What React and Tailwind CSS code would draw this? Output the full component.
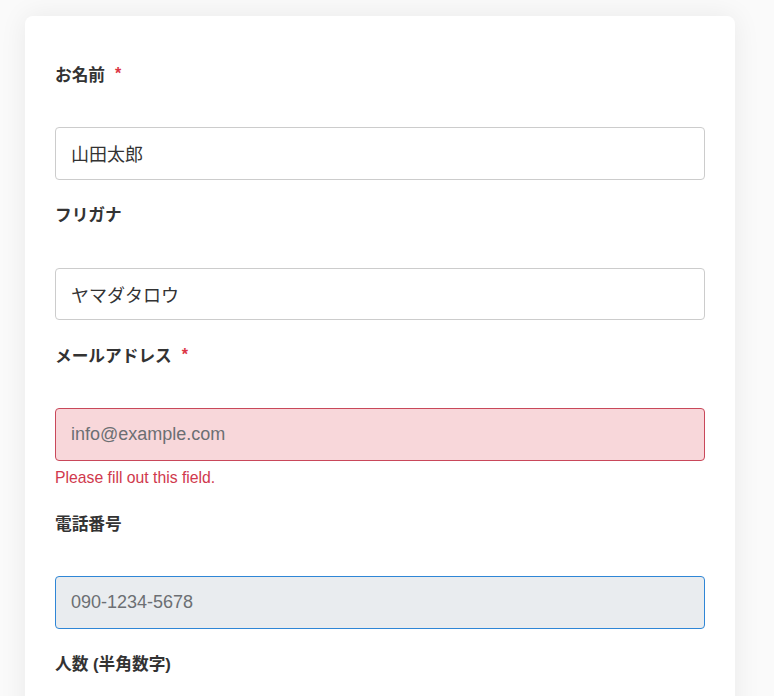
import { useState } from "react";

const fields = [
  { id: "name", label: "お名前", required: true, value: "山田太郎", placeholder: "" },
  { id: "kana", label: "フリガナ", value: "ヤマダタロウ", placeholder: "" },
  {
    id: "email",
    label: "メールアドレス",
    required: true,
    value: "",
    placeholder: "info@example.com",
    error: "Please fill out this field.",
  },
  { id: "tel", label: "電話番号", value: "", placeholder: "090-1234-5678", focused: true },
  { id: "count", label: "人数 (半角数字)", value: "", placeholder: "" },
];

function Field({ field, value, onChange }) {
  let inputClass = "border-[#cccccc] bg-white";
  if (field.error) inputClass = "border-[#c9485a] bg-[#f8d7da]";
  if (field.focused) inputClass = "border-[#2f86d6] bg-[#e9ecef]";

  return (
    <div className="mb-[24.5px]">
      <label
        htmlFor={field.id}
        className="mb-[39.5px] flex h-6 items-center text-[16.7px] font-bold text-[#333333]"
      >
        {field.label}
        {field.required && (
          <span className="ml-[10px] -mt-[3px] text-[16px] leading-none text-[#dc3545]">*</span>
        )}
      </label>
      <input
        id={field.id}
        type="text"
        value={value}
        placeholder={field.placeholder}
        onChange={(e) => onChange(field.id, e.target.value)}
        className={`block h-[52.5px] w-full rounded-[4px] border px-[15px] text-[18px] text-[#333333] outline-none placeholder:text-[#6c6f73] ${inputClass}`}
      />
      {field.error && (
        <p className="mt-[6.5px] mb-[1px] text-[15.75px] leading-[21px] text-[#d0394d]">{field.error}</p>
      )}
    </div>
  );
}

export default function App() {
  const [values, setValues] = useState(
    Object.fromEntries(fields.map((f) => [f.id, f.value]))
  );

  const update = (id, v) => setValues((prev) => ({ ...prev, [id]: v }));

  return (
    <div
      className="min-h-screen bg-[#fafafa] pt-4 pl-[25px]"
      style={{ fontFamily: '"Liberation Sans", "Noto Sans CJK JP", sans-serif' }}
    >
      <form className="w-[710px] rounded-lg bg-white px-[30px] pt-[47.5px] pb-10 shadow-[0_0_28px_rgba(0,0,0,0.07)]">
        {fields.map((f) => (
          <Field key={f.id} field={f} value={values[f.id]} onChange={update} />
        ))}
      </form>
    </div>
  );
}
